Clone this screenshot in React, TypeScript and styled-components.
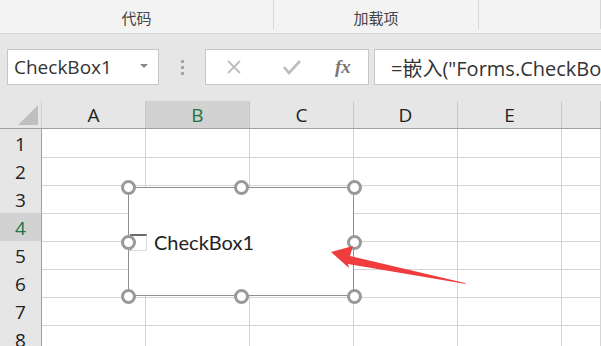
import React from 'react'
import styled, { createGlobalStyle } from 'styled-components'

const GlobalStyle = createGlobalStyle`
  html, body {
    margin: 0;
    padding: 0;
    background: #ffffff;
    overflow: hidden;
  }
  * { box-sizing: border-box; }
`

const columns = ['A', 'B', 'C', 'D', 'E', '']
const rows = [1, 2, 3, 4, 5, 6, 7, 8]

const App = () => {
  return (
    <Page>
      <GlobalStyle />
      <Ribbon>
        <Tab w={274}>代码</Tab>
        <Tab w={205}>加载项</Tab>
        <Tab w={122} />
      </Ribbon>
      <FormulaBar>
        <NameBox>
          <span>CheckBox1</span>
          <Caret />
        </NameBox>
        <Grip>
          <i /><i /><i />
        </Grip>
        <ButtonBox>
          <FxButton>
            <svg width="16" height="16" viewBox="0 0 16 16">
              <path d="M2 2 L14 14 M14 2 L2 14" stroke="#bdbdbd" strokeWidth="1.8" fill="none" />
            </svg>
          </FxButton>
          <FxButton>
            <svg width="20" height="16" viewBox="0 0 20 16">
              <path d="M2 8 L7 14 L18 2" stroke="#bdbdbd" strokeWidth="2.6" fill="none" />
            </svg>
          </FxButton>
          <FxLabel>fx</FxLabel>
        </ButtonBox>
        <Input>=嵌入("Forms.CheckBox.1","")</Input>
      </FormulaBar>
      <Sheet>
        <HeaderRow>
          <Corner><Triangle /></Corner>
          {columns.map((c, i) => (
            <ColHead key={i} active={c === 'B'}>{c}</ColHead>
          ))}
        </HeaderRow>
        {rows.map(r => (
          <Row key={r}>
            <RowHead active={r === 4}>{r}</RowHead>
            {columns.map((c, i) => <Cell key={i} />)}
          </Row>
        ))}
        <Control>
          <Frame />
          <CheckRow>
            <Box />
            <Label>CheckBox1</Label>
          </CheckRow>
          <Handle x={0} y={0} />
          <Handle x={50} y={0} />
          <Handle x={100} y={0} />
          <Handle x={0} y={50} />
          <Handle x={100} y={50} />
          <Handle x={0} y={100} />
          <Handle x={50} y={100} />
          <Handle x={100} y={100} />
        </Control>
        <Arrow width="150" height="50" viewBox="0 0 150 50">
          <path d="M0 18 L22 12 L19 22 L134 49 L135 50 L17 30 L18 34 Z" fill="#f03c3c" />
        </Arrow>
      </Sheet>
    </Page>
  )
}

export default App

const Page = styled.div`
  width: 601px;
  height: 346px;
  display: flex;
  flex-direction: column;
  font-family: "Noto Sans CJK SC", "Open Sans", sans-serif;
  overflow: hidden;
  & > * { flex-shrink: 0; }
`
const Ribbon = styled.div`
  height: 34px;
  display: flex;
  background: #f3f3f3;
  border-bottom: 1px solid #d6d6d6;
`
const Tab = styled.div<{ w: number }>`
  width: ${p => p.w}px;
  height: 29px;
  display: flex;
  justify-content: center;
  align-items: flex-end;
  padding-bottom: 1px;
  font-size: 15px;
  color: #444;
  border-right: 1px solid #d6d6d6;
  line-height: 20px;
`
const FormulaBar = styled.div`
  height: 61px;
  display: flex;
  align-items: flex-start;
  padding: 15px 0 0 7px;
  background: #e6e6e6;
`
const NameBox = styled.div`
  width: 152px;
  height: 36px;
  background: #fff;
  border: 1px solid #c6c6c6;
  display: flex;
  align-items: center;
  justify-content: space-between;
  padding: 0 10px 0 6px;
  font-family: "Open Sans", sans-serif;
  font-size: 19px;
  color: #333;
`
const Caret = styled.div`
  width: 0;
  height: 0;
  border-left: 4px solid transparent;
  border-right: 4px solid transparent;
  border-top: 4px solid #888;
  margin-bottom: 2px;
`
const Grip = styled.div`
  width: 46px;
  height: 36px;
  display: flex;
  flex-direction: column;
  align-items: center;
  justify-content: center;
  gap: 3px;
  i {
    width: 3px;
    height: 3px;
    background: #a5a5a5;
  }
`
const ButtonBox = styled.div`
  width: 164px;
  height: 36px;
  background: #fff;
  border: 1px solid #c6c6c6;
  display: flex;
  align-items: center;
  padding-left: 19px;
`
const FxButton = styled.div`
  width: 56px;
  display: flex;
  align-items: center;
  padding-left: 1px;
`
const FxLabel = styled.div`
  font-family: "Liberation Serif", serif;
  font-style: italic;
  font-weight: bold;
  font-size: 19px;
  color: #777;
  margin-left: -2px;
`
const Input = styled.div`
  flex: 1;
  height: 36px;
  margin-left: 5px;
  background: #fff;
  border: 1px solid #c6c6c6;
  border-right: none;
  display: flex;
  align-items: center;
  padding-left: 16px;
  font-family: "Open Sans", "Noto Sans CJK SC", sans-serif;
  font-size: 20px;
  color: #333;
  white-space: nowrap;
  overflow: hidden;
`
const Sheet = styled.div`
  position: relative;
  flex: 1;
  background: #fff;
`
const HeaderRow = styled.div`
  height: 34px;
  display: grid;
  grid-template-columns: 42px 104px 104px 104px 104px 104px 39px;
  padding-top: 6px;
  background: #e6e6e6;
  border-bottom: 1px solid #a0a0a0;
`
const Corner = styled.div`
  position: relative;
  border-right: 1px solid #d0d0d0;
`
const Triangle = styled.div`
  position: absolute;
  right: 3px;
  bottom: 3px;
  width: 0;
  height: 0;
  border-left: 20px solid transparent;
  border-bottom: 20px solid #bfbfbf;
`
const ColHead = styled.div<{ active?: boolean }>`
  display: flex;
  justify-content: center;
  align-items: center;
  padding-top: 1px;
  font-family: "Open Sans", sans-serif;
  font-size: 19px;
  color: ${p => (p.active ? '#217346' : '#222')};
  background: ${p => (p.active ? '#d2d2d2' : 'transparent')};
  border-right: 1px solid #c8c8c8;
`
const Row = styled.div`
  height: 28px;
  display: grid;
  grid-template-columns: 42px 104px 104px 104px 104px 104px 39px;
`
const RowHead = styled.div<{ active?: boolean }>`
  display: flex;
  justify-content: center;
  align-items: center;
  padding-top: 2px;
  font-family: "Open Sans", sans-serif;
  font-size: 19px;
  color: ${p => (p.active ? '#217346' : '#222')};
  background: ${p => (p.active ? '#d2d2d2' : '#e6e6e6')};
  border-right: 1px solid #a0a0a0;
  border-bottom: 1px solid #c8c8c8;
`
const Cell = styled.div`
  border-right: 1px solid #d4d4d4;
  border-bottom: 1px solid #d4d4d4;
`
const Control = styled.div`
  position: absolute;
  left: 128px;
  top: 92px;
  width: 226px;
  height: 109px;
`
const Frame = styled.div`
  position: absolute;
  inset: 0;
  background: #fff;
  border: 1px solid #8f8f8f;
`
const CheckRow = styled.div`
  position: absolute;
  left: 2px;
  top: 44px;
  display: flex;
  align-items: center;
  gap: 7px;
`
const Box = styled.div`
  width: 17px;
  height: 17px;
  border: 1px solid #dcdcdc;
  border-top: 2px solid #6a6a6a;
  border-left: 1px solid #8a8a8a;
`
const Label = styled.div`
  font-family: "Lato", sans-serif;
  font-size: 20px;
  color: #222;
  line-height: 22px;
`
const Handle = styled.div<{ x: number; y: number }>`
  position: absolute;
  left: ${p => p.x}%;
  top: ${p => p.y}%;
  width: 15px;
  height: 15px;
  margin: -7px 0 0 -7px;
  border-radius: 50%;
  background: #fff;
  border: 3px solid #999;
`
const Arrow = styled.svg`
  position: absolute;
  left: 331px;
  top: 139px;
`
